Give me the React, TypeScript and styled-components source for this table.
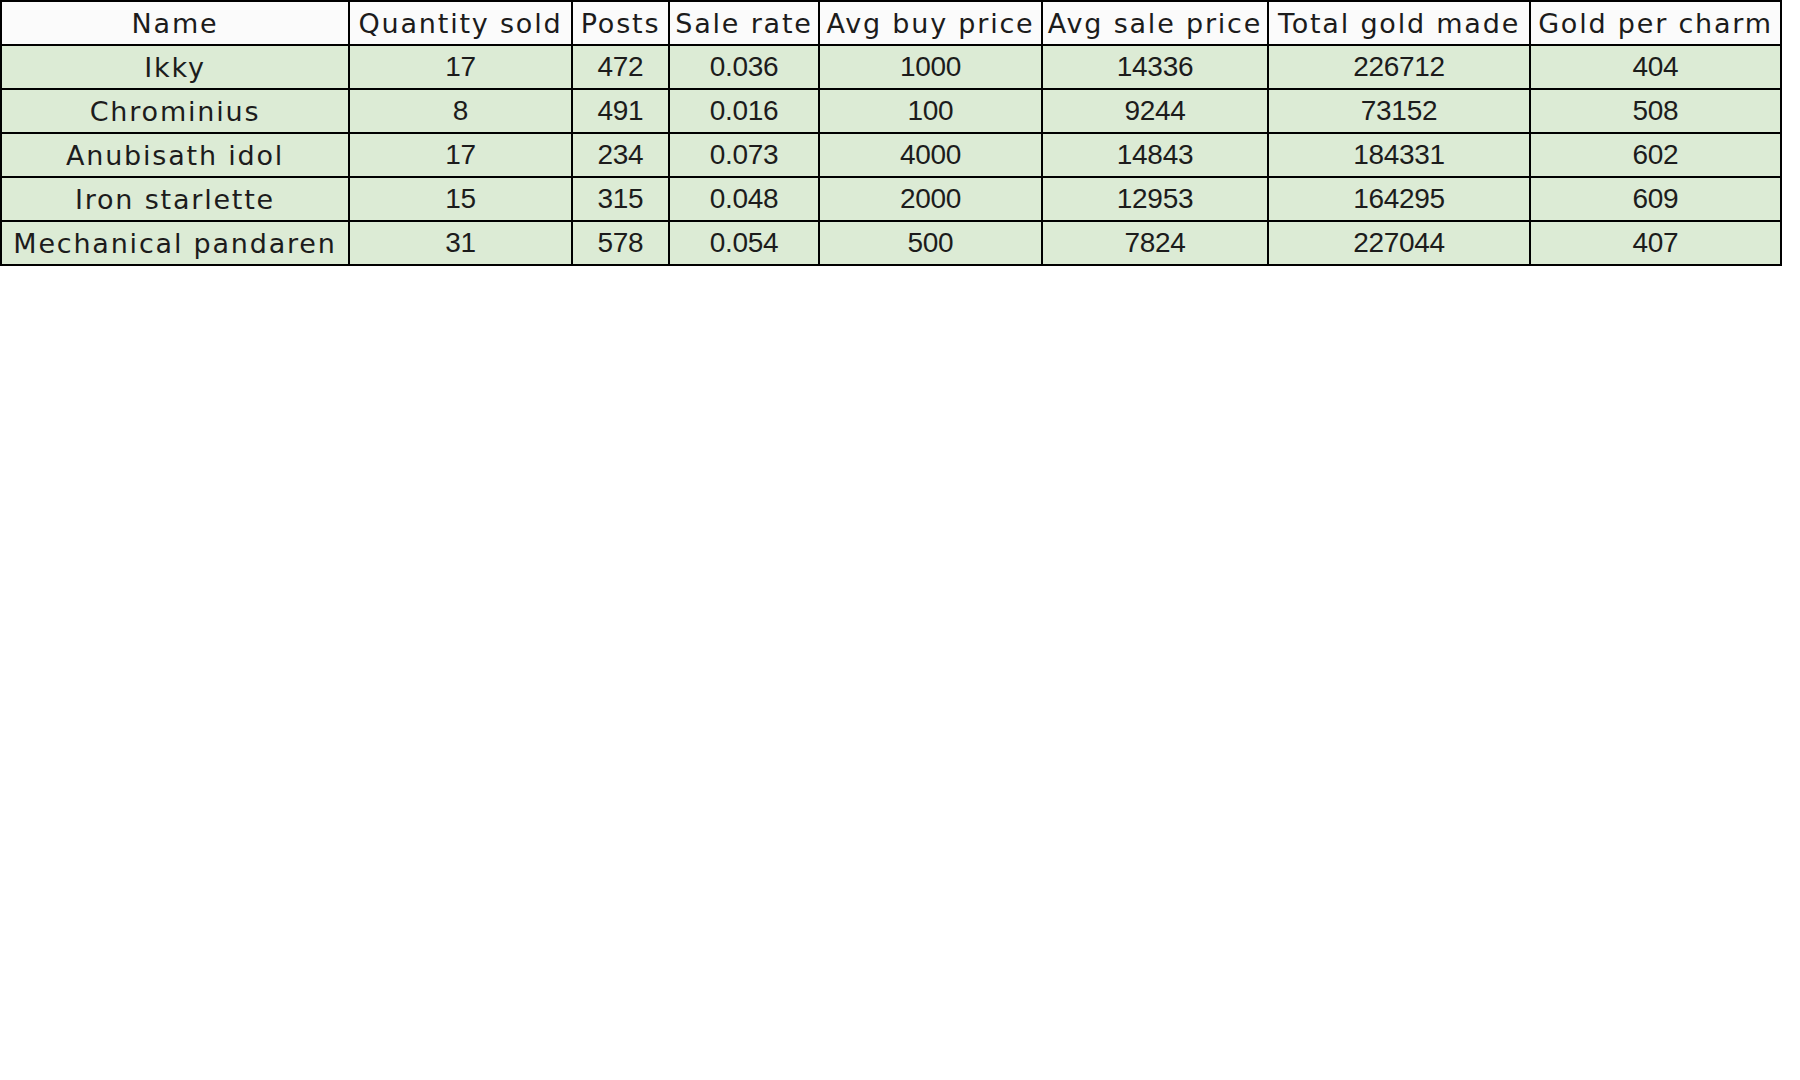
import styled, { createGlobalStyle } from 'styled-components';

const GlobalStyle = createGlobalStyle`
  html, body {
    margin: 0;
    padding: 0;
    background: #ffffff;
  }
`;

type Charm = {
  name: string;
  quantitySold: number;
  posts: number;
  saleRate: string;
  avgBuyPrice: number;
  avgSalePrice: number;
  totalGold: number;
  goldPerCharm: number;
};

const columns = [
  { title: 'Name', width: 348 },
  { title: 'Quantity sold', width: 223 },
  { title: 'Posts', width: 97 },
  { title: 'Sale rate', width: 150 },
  { title: 'Avg buy price', width: 223 },
  { title: 'Avg sale price', width: 226 },
  { title: 'Total gold made', width: 262 },
  { title: 'Gold per charm', width: 251 },
];

const charms: Charm[] = [
  { name: 'Ikky', quantitySold: 17, posts: 472, saleRate: '0.036', avgBuyPrice: 1000, avgSalePrice: 14336, totalGold: 226712, goldPerCharm: 404 },
  { name: 'Chrominius', quantitySold: 8, posts: 491, saleRate: '0.016', avgBuyPrice: 100, avgSalePrice: 9244, totalGold: 73152, goldPerCharm: 508 },
  { name: 'Anubisath idol', quantitySold: 17, posts: 234, saleRate: '0.073', avgBuyPrice: 4000, avgSalePrice: 14843, totalGold: 184331, goldPerCharm: 602 },
  { name: 'Iron starlette', quantitySold: 15, posts: 315, saleRate: '0.048', avgBuyPrice: 2000, avgSalePrice: 12953, totalGold: 164295, goldPerCharm: 609 },
  { name: 'Mechanical pandaren', quantitySold: 31, posts: 578, saleRate: '0.054', avgBuyPrice: 500, avgSalePrice: 7824, totalGold: 227044, goldPerCharm: 407 },
];

const Table = styled.table`
  border-collapse: collapse;
  table-layout: fixed;
  width: 1780px;
  font-family: 'DejaVu Sans', 'Noto Sans', sans-serif;
  font-size: 27px;
  color: #1c1c1c;
`;

const HeadCell = styled.th`
  height: 42px;
  padding: 0;
  border: 2px solid #000;
  background: #fbfbfb;
  font-weight: 400;
  letter-spacing: 1.8px;
  text-align: center;
  white-space: nowrap;
  overflow: hidden;
`;

const Cell = styled.td<{ $numeric?: boolean }>`
  height: 42px;
  padding: 0;
  border: 2px solid #000;
  background: #dcebd5;
  font-family: ${({ $numeric }) =>
    $numeric ? "'Liberation Sans', Arial, sans-serif" : 'inherit'};
  font-size: ${({ $numeric }) => ($numeric ? '28px' : 'inherit')};
  letter-spacing: ${({ $numeric }) => ($numeric ? '-0.3px' : '1.8px')};
  text-align: center;
  white-space: nowrap;
  overflow: hidden;
`;

const App = () => {
  return (
    <>
      <GlobalStyle />
      <Table>
        <colgroup>
          {columns.map((col) => (
            <col key={col.title} style={{ width: col.width }} />
          ))}
        </colgroup>
        <thead>
          <tr>
            {columns.map((col) => (
              <HeadCell key={col.title}>{col.title}</HeadCell>
            ))}
          </tr>
        </thead>
        <tbody>
          {charms.map((charm) => (
            <tr key={charm.name}>
              <Cell>{charm.name}</Cell>
              <Cell $numeric>{charm.quantitySold}</Cell>
              <Cell $numeric>{charm.posts}</Cell>
              <Cell $numeric>{charm.saleRate}</Cell>
              <Cell $numeric>{charm.avgBuyPrice}</Cell>
              <Cell $numeric>{charm.avgSalePrice}</Cell>
              <Cell $numeric>{charm.totalGold}</Cell>
              <Cell $numeric>{charm.goldPerCharm}</Cell>
            </tr>
          ))}
        </tbody>
      </Table>
    </>
  );
};

export default App;
